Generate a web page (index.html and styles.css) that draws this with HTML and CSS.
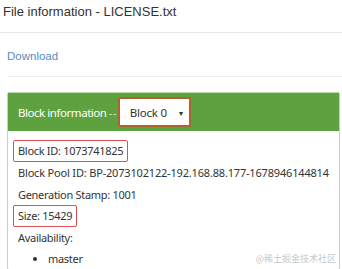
FILE: index.html
```html
<!DOCTYPE html>
<html lang="en">
<head>
  <meta charset="UTF-8" />
  <meta name="viewport" content="width=device-width, initial-scale=1" />
  <title>File information - LICENSE.txt</title>
  <link rel="stylesheet" href="styles.css">
</head>
<body>

  <h3 class="title">File information - LICENSE.txt</h3>

  <div class="content">
    <a class="download" href="#">Download</a>
    <hr class="sep" />

    <div class="panel">
      <div class="panel-heading">
        <span class="panel-title">Block information <span class="dashes">--</span></span>
        <div class="select mark-brown">
          <span>Block 0</span>
          <span class="caret">&#9662;</span>
        </div>
      </div>
      <div class="panel-body">
        <div class="row mark">Block ID: 1073741825</div>
        <div class="row">Block Pool ID: BP-2073102122-192.168.88.177-1678946144814</div>
        <div class="row">Generation Stamp: 1001</div>
        <div class="row mark">Size: 15429</div>
        <div class="row">Availability:</div>
        <ul class="hosts">
          <li>master</li>
        </ul>
      </div>
    </div>
  </div>

  <div class="watermark">@稀土掘金技术社区</div>

</body>
</html>
```

FILE: styles.css
```css
body {
  margin: 0;
  font-family: "Liberation Sans", Arial, sans-serif;
  color: #333;
  background: #fff;
  overflow: hidden;
}
.title {
  margin: 0;
  padding: 4px 3px 0;
  height: 28px;
  font-size: 13px;
  font-weight: normal;
  line-height: 16px;
  border-bottom: 1px solid #e6e6e6;
}
.content {
  padding: 0 2px 0 7px;
}
.download {
  display: block;
  margin-top: 15px;
  font-size: 11.5px;
  line-height: 16px;
  color: #5a8bc0;
  text-decoration: none;
}
.sep {
  margin: 12px -2px 15px 0;
  border: 0;
  border-top: 1px solid #ececec;
}
.panel {
  border: 1px solid #b9dca8;
  border-radius: 2px;
  font-family: "Noto Sans", sans-serif;
}
.panel-heading {
  display: flex;
  align-items: center;
  gap: 1px;
  height: 38px;
  padding: 0 10px;
  background: #5ea23f;
  color: #fff;
}
.panel-title {
  font-size: 11.5px;
  letter-spacing: -0.45px;
}
.dashes {
  font-size: 10px;
  letter-spacing: 0.6px;
  color: #d8ead0;
}
.select {
  display: flex;
  align-items: center;
  justify-content: space-between;
  width: 53px;
  height: 26px;
  padding: 0 6px 0 10px;
  background: #fff;
  color: #333;
  font-size: 11.5px;
  letter-spacing: -0.2px;
  border-radius: 2px;
}
.caret {
  font-size: 8px;
}
.mark-brown {
  border: 2px solid #b0642c;
}
.panel-body {
  padding: 9px 5px 0;
  font-size: 11px;
  letter-spacing: -0.3px;
}
.row {
  width: fit-content;
  padding: 0 4px;
  line-height: 19.8px;
  border: 1px solid transparent;
  white-space: nowrap;
}
.row:nth-child(2) {
  letter-spacing: -0.18px;
}
.mark {
  border-color: #de4f4f;
  border-radius: 2px;
}
.hosts {
  margin: 0;
  padding-left: 35px;
  line-height: 20px;
}
.watermark {
  position: absolute;
  right: 6px;
  bottom: 4px;
  font-family: "Noto Sans CJK SC", sans-serif;
  font-size: 9px;
  color: #c8c8c8;
}
```
